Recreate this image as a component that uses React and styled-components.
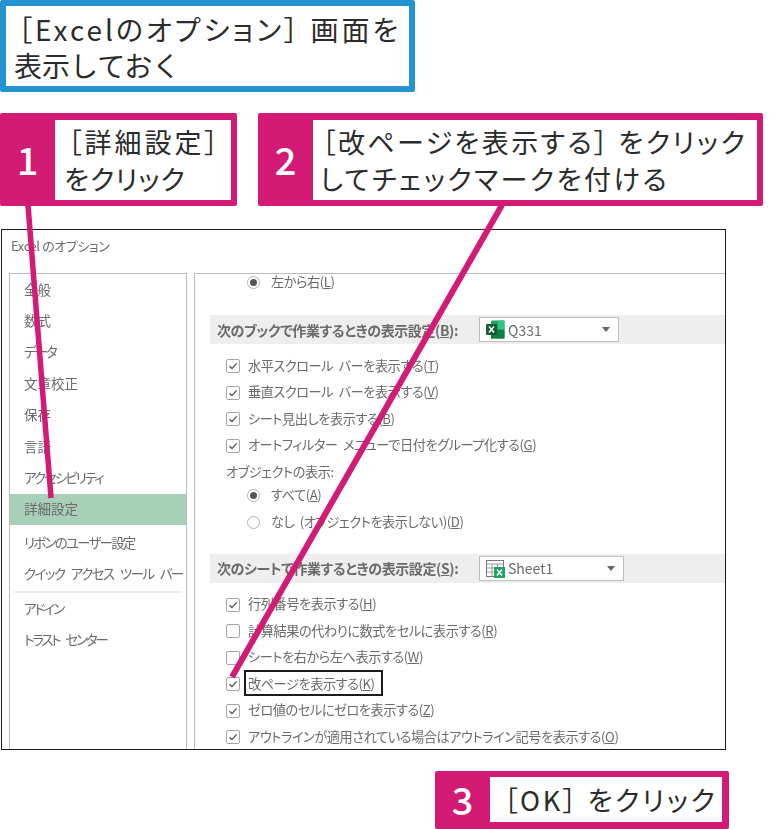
import styled, { createGlobalStyle } from "styled-components";

const pink = "#d31a74";

const GlobalStyle = createGlobalStyle`
    html, body {
        margin: 0;
        background: #fff;
    }
`;

const Page = styled.div`
    position: relative;
    display: flex;
    flex-direction: column;
    width: 783px;
    height: 829px;
    overflow: hidden;
    font-family: "Noto Sans CJK JP", "Noto Sans", sans-serif;
    color: #2b2b2b;
`;

const Note = styled.div`
    box-sizing: border-box;
    width: 415px;
    height: 92px;
    padding: 5px 0 0 8px;
    border: 6px solid #2393d1;
    border-radius: 2px;
    font-size: 28px;
    line-height: 36px;
    white-space: nowrap;
`;

const Wide = styled.span`
    display: block;
    margin-left: ${(p) => p.$left || 0}px;
    letter-spacing: ${(p) => p.$spacing}px;
    font-feature-settings: "palt";
`;

const Steps = styled.div`
    display: flex;
    gap: 21px;
    margin-top: 21px;
    height: 93px;
`;

const Step = styled.div`
    display: flex;
    box-sizing: border-box;
    width: ${(p) => p.$width}px;
    height: ${(p) => p.$height || 93}px;
    padding: ${(p) => p.$pad || "7px 6px 6px 0"};
    background: ${pink};
    border-radius: 2px;
`;

const Num = styled.div`
    display: flex;
    align-items: center;
    justify-content: center;
    flex: none;
    width: ${(p) => p.$width}px;
    padding-bottom: ${(p) => p.$lift || 0}px;
    color: #fff;
    font-size: 38px;
    font-weight: 500;
`;

const StepText = styled.div`
    flex: 1;
    padding: ${(p) => p.$pad};
    background: #fff;
    font-size: 27px;
    line-height: 37px;
    white-space: nowrap;
`;

const Window = styled.div`
    box-sizing: border-box;
    width: 725px;
    height: 521px;
    margin: 23px 0 0 1px;
    border: 1px solid #1c1c1c;
    overflow: hidden;
    color: #6a6a6a;
    font-feature-settings: "palt";
`;

const Blurred = styled.div`
    filter: blur(0.35px);
`;

const TitleBar = styled.div`
    display: flex;
    align-items: center;
    height: 43px;
    padding-left: 9px;
    padding-bottom: 13px;
    box-sizing: border-box;
    font-size: 13px;
    letter-spacing: -0.4px;
`;

const Body = styled.div`
    display: flex;
    gap: 7px;
    padding-left: 7px;
    height: 480px;
`;

const Sidebar = styled.div`
    flex: none;
    box-sizing: border-box;
    width: 178px;
    border: 1px solid #bdbdbd;
    border-bottom: 0;
`;

const NavItem = styled.div`
    display: flex;
    align-items: center;
    box-sizing: border-box;
    height: 31.4px;
    padding: 0 0 2px 14px;
    font-size: 13.5px;
    letter-spacing: ${(p) => p.$tight || 0}px;
    word-spacing: 5px;
    white-space: nowrap;
    background: ${(p) => (p.$active ? "#a8cfb8" : "transparent")};
`;

const NavGap = styled.div`
    height: 2px;
`;

const NavDivider = styled.div`
    height: 2px;
    margin: 1px 4px 0;
    background: #eeeeee;
`;

const Main = styled.div`
    flex: 1;
    min-width: 0;
    border-left: 1px solid #bdbdbd;
    border-top: 1px solid #bdbdbd;
    padding-left: 15px;
`;

const Band = styled.div`
    display: flex;
    align-items: center;
    height: 29px;
    margin-top: ${(p) => p.$top}px;
    margin-bottom: 9px;
    padding-left: 7px;
    background: #eeeeee;
    font-size: 14px;
    font-weight: 700;
    white-space: nowrap;
`;

const BandLabel = styled.span`
    width: 262px;
    flex: none;
    letter-spacing: -0.4px;
`;

const Select = styled.div`
    display: flex;
    align-items: center;
    gap: 3px;
    box-sizing: border-box;
    width: ${(p) => p.$width}px;
    height: 25px;
    padding: 0 8px 0 6px;
    background: #fff;
    border: 1px solid #bdbdbd;
    font-size: 14px;
    font-weight: 400;
`;

const Caret = styled.span`
    margin-left: auto;
    width: 0;
    height: 0;
    border-left: 4.5px solid transparent;
    border-right: 4.5px solid transparent;
    border-top: 5px solid #666;
`;

const Row = styled.div`
    display: flex;
    align-items: center;
    box-sizing: border-box;
    height: ${(p) => p.$height || 26.5}px;
    margin-top: ${(p) => p.$top || 0}px;
    padding-left: ${(p) => p.$left}px;
    font-size: 13.2px;
    letter-spacing: -0.45px;
    word-spacing: 3px;
    white-space: nowrap;

    & > span:last-child {
        position: relative;
        top: -1px;
    }
`;

const Box = styled.span`
    display: flex;
    align-items: center;
    justify-content: center;
    flex: none;
    box-sizing: border-box;
    width: 14px;
    height: 14px;
    margin-right: 8px;
    background: #fff;
    border: 1px solid #a5a5a5;
    border-radius: 2px;
`;

const Radio = styled.span`
    display: flex;
    align-items: center;
    justify-content: center;
    flex: none;
    box-sizing: border-box;
    width: 13px;
    height: 13px;
    margin-right: 11px;
    border: 1px solid #b0b0b0;
    border-radius: 50%;

    &::after {
        content: "";
        display: ${(p) => (p.$on ? "block" : "none")};
        width: 7px;
        height: 7px;
        border-radius: 50%;
        background: #555;
    }
`;

const Focus = styled.span`
    display: flex;
    align-items: center;
    box-sizing: border-box;
    width: 139px;
    height: 26px;
    margin-left: -4px;
    padding-left: 2px;
    border: 2px solid #1c1c1c;
`;

const Leaders = styled.svg`
    position: absolute;
    inset: 0;
    pointer-events: none;
`;

const Footer = styled.div`
    margin: 21px 0 0 435px;
`;

const Check = () => (
    <svg width="10" height="10" viewBox="0 0 10 10" fill="none">
        <path d="M1.5 5.2 4 7.6 8.6 2.4" stroke="#555" strokeWidth="1.4" />
    </svg>
);

const ExcelIcon = () => (
    <svg width="19" height="19" viewBox="0 0 19 19">
        <rect x="5" y="0.5" width="13.5" height="18" rx="1" fill="#21a366" />
        <rect x="5" y="9.5" width="13.5" height="9" fill="#107c41" />
        <rect x="12" y="0.5" width="6.5" height="9" fill="#33c481" />
        <rect x="0" y="4" width="11" height="11" rx="1" fill="#185c37" />
        <path d="M3 6.5 8 12.5M8 6.5 3 12.5" stroke="#fff" strokeWidth="1.5" />
    </svg>
);

const SheetIcon = () => (
    <svg width="19" height="19" viewBox="0 0 19 19" fill="none">
        <rect x="0.5" y="1.5" width="17" height="16" fill="#fff" stroke="#777" />
        <path d="M0.5 5h17M0.5 9h17M0.5 13h17M6 5v12.5M11.500 5v12.500" stroke="#999" />
        <rect x="8" y="8" width="11" height="11" fill="#21a366" />
        <path d="M11 10.500 16 16.500M16 10.500 11 16.500" stroke="#fff" strokeWidth="1.400" />
    </svg>
);

const Option = ({ checked = true, label, hotkey }) => (
    <Row $left={16}>
        <Box>{checked && <Check />}</Box>
        <span>
            {label}(<u>{hotkey}</u>)
        </span>
    </Row>
);

const navTop = [
    ["全般", 0],
    ["数式", 0],
    ["データ", -2],
    ["文章校正", 0],
    ["保存", 0],
    ["言語", 0],
    ["アクセシビリティ", -2],
];

const App = () => (
    <Page>
        <GlobalStyle />
        <Note>
            <Wide $spacing={3} $left={4}>
                ［Excelのオプション］ 画面を
            </Wide>
            表示しておく
        </Note>
        <Steps>
            <Step $width={237}>
                <Num $width={55} $lift={4}>
                    1
                </Num>
                <StepText $pad="3px 0 0 9px">
                    <Wide $spacing={3} $left={4}>
                        ［詳細設定］
                    </Wide>
                    <Wide $spacing={1}>をクリック</Wide>
                </StepText>
            </Step>
            <Step $width={505}>
                <Num $width={55} $lift={4}>
                    2
                </Num>
                <StepText $pad="3px 0 0 7px">
                    <Wide $spacing={2.4} $left={2}>
                        ［改ページを表示する］ をクリック
                    </Wide>
                    <Wide $spacing={2.5}>してチェックマークを付ける</Wide>
                </StepText>
            </Step>
        </Steps>
        <Window>
            <Blurred>
                <TitleBar>Excel のオプション</TitleBar>
                <Body>
                    <Sidebar>
                        {navTop.map(([label, tight]) => (
                            <NavItem key={label} $tight={tight}>
                                {label}
                            </NavItem>
                        ))}
                        <NavItem $active>詳細設定</NavItem>
                        <NavGap />
                        <NavItem $tight={-1.8}>リボンのユーザー設定</NavItem>
                        <NavItem $tight={-1.6}>クイック アクセス ツール バー</NavItem>
                        <NavDivider />
                        <NavItem $tight={-2}>アドイン</NavItem>
                        <NavItem $tight={-2.2}>トラスト センター</NavItem>
                    </Sidebar>
                    <Main>
                        <Row $left={37} $height={17}>
                            <Radio $on />
                            <span>
                                左から右(<u>L</u>)
                            </span>
                        </Row>
                        <Band $top={24}>
                            <BandLabel>
                                次のブックで作業するときの表示設定(<u>B</u>):
                            </BandLabel>
                            <Select $width={140}>
                                <ExcelIcon />
                                Q331
                                <Caret />
                            </Select>
                        </Band>
                        <Option label="水平スクロール バーを表示する" hotkey="T" />
                        <Option label="垂直スクロール バーを表示する" hotkey="V" />
                        <Option label="シート見出しを表示する" hotkey="B" />
                        <Option label="オートフィルター メニューで日付をグループ化する" hotkey="G" />
                        <Row $left={16}>
                            <span>オブジェクトの表示:</span>
                        </Row>
                        <Row $left={37} $top={-3}>
                            <Radio $on />
                            <span>
                                すべて(<u>A</u>)
                            </span>
                        </Row>
                        <Row $left={37}>
                            <Radio />
                            <span>
                                なし (オブジェクトを表示しない)(<u>D</u>)
                            </span>
                        </Row>
                        <Band $top={18}>
                            <BandLabel>
                                次のシートで作業するときの表示設定(<u>S</u>):
                            </BandLabel>
                            <Select $width={145}>
                                <SheetIcon />
                                Sheet1
                                <Caret />
                            </Select>
                        </Band>
                        <Option label="行列番号を表示する" hotkey="H" />
                        <Option checked={false} label="計算結果の代わりに数式をセルに表示する" hotkey="R" />
                        <Option checked={false} label="シートを右から左へ表示する" hotkey="W" />
                        <Row $left={16}>
                            <Box>
                                <Check />
                            </Box>
                            <Focus>
                                <span>
                                    改ページを表示する(<u>K</u>)
                                </span>
                            </Focus>
                        </Row>
                        <Option label="ゼロ値のセルにゼロを表示する" hotkey="Z" />
                        <Option label="アウトラインが適用されている場合はアウトライン記号を表示する" hotkey="O" />
                    </Main>
                </Body>
            </Blurred>
        </Window>
        <Footer>
            <Step $width={294} $height={58} $pad="6px 7px 7px 0">
                <Num $width={55} $lift={3}>
                    3
                </Num>
                <StepText $pad="4px 0 0 14px">
                    <Wide $spacing={2.6}>［OK］ をクリック</Wide>
                </StepText>
            </Step>
        </Footer>
        <Leaders width="783" height="829" viewBox="0 0 783 829">
            <path d="M28 205 51 498" stroke={pink} strokeWidth="5.5" />
            <path d="M502 205 232 677" stroke={pink} strokeWidth="6" />
        </Leaders>
    </Page>
);

export default App;
